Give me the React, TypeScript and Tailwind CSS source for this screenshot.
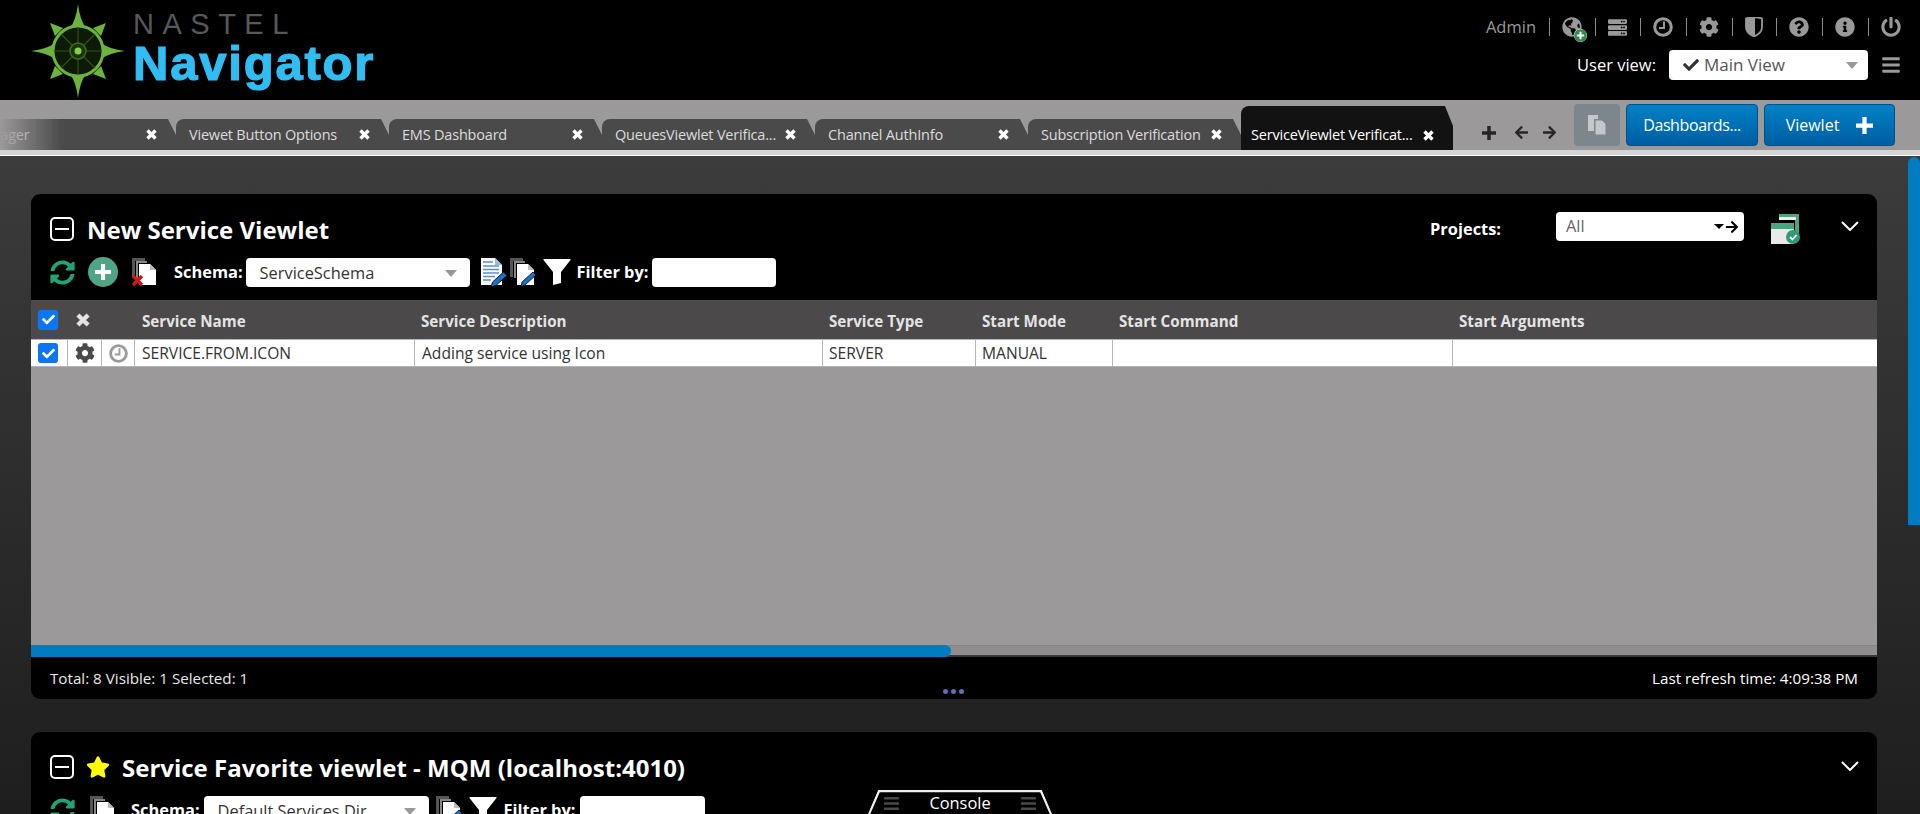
import { ReactNode } from 'react'
import {
  FaArrowLeft, FaArrowRight, FaCheck, FaCog, FaInfoCircle, FaPlusCircle, FaPowerOff,
  FaQuestionCircle, FaServer, FaStar, FaSyncAlt, FaGlobeAmericas, FaBars,
} from 'react-icons/fa'

const tabs = ['Queue Manager', 'Viewet Button Options', 'EMS Dashboard', 'QueuesViewlet Verifica...', 'Channel AuthInfo', 'Subscription Verification']

function Logo() {
  return (
    <div className="flex items-start">
      <svg width="94" height="94" viewBox="0 0 94 94" className="mt-[4px] ml-[31px]">
        <g fill="#6cb33f">
          <path d="M47 0Q49 16 55 24L39 24Q45 16 47 0Z" />
          <path d="M47 94Q49 78 55 70L39 70Q45 78 47 94Z" />
          <path d="M0 47Q16 45 24 39L24 55Q16 49 0 47Z" />
          <path d="M94 47Q78 45 70 39L70 55Q78 49 94 47Z" />
          <path d="M19 19L32 24L24 32Z M75 19L70 32L62 24Z M19 75L24 62L32 70Z M75 75L62 70L70 62Z" />
        </g>
        <circle cx="47" cy="47" r="25" fill="#0c1a06" stroke="#6cb33f" strokeWidth="3" />
        <g stroke="#2f5218" strokeWidth="1.2" fill="none">
          <path d="M47 23V71M23 47H71M30 30L64 64M64 30L30 64" />
        </g>
        <circle cx="47" cy="47" r="8" fill="#1c3510" stroke="#3f6b25" strokeWidth="1.5" />
        <circle cx="47" cy="47" r="3.500" fill="#7fd04a" />
      </svg>
      <div className="ml-[8px] flex flex-col font-['Liberation_Sans',sans-serif]">
        <span className="mt-[8px] text-[29px] leading-[32px] tracking-[8.500px] text-[#58585a]">NASTEL</span>
        <span className="-mt-[2px] text-[49px] leading-[50px] font-bold tracking-[1.800px] text-[#2fbdf4] [-webkit-text-stroke:1.2px_#2fbdf4]">Navigator</span>
      </div>
    </div>
  )
}

function Sep() {
  return <span className="mx-[12.500px] h-[18px] w-px bg-[#8a8a8a]" />
}

function ThickClock({ size }: { size: number }) {
  return (
    <svg width={size} height={size} viewBox="0 0 20 20" fill="none" stroke="currentColor">
      <circle cx="10" cy="10" r="8.300" strokeWidth="3" />
      <path d="M11 4.500V11H6" strokeWidth="2" />
    </svg>
  )
}

function HalfShield() {
  return (
    <svg width="18" height="20" viewBox="0 0 18 20">
      <path d="M1 1.500Q9 -1 17 1.500V10Q17 16 9 19.500Q1 16 1 10Z" fill="none" stroke="currentColor" strokeWidth="1.800" />
      <path d="M1 1.500Q6 0 10 0V20L9 19.500Q1 16 1 10Z" fill="currentColor" />
    </svg>
  )
}

function FatX({ size = 11 }: { size?: number }) {
  return (
    <svg width={size} height={size} viewBox="0 0 11 11" className="shrink-0" stroke="currentColor" strokeWidth="3.400">
      <path d="M1.500 1.500L9.500 9.500M9.500 1.500L1.500 9.500" />
    </svg>
  )
}

function FatPlus({ size }: { size: number }) {
  return (
    <svg width={size} height={size} viewBox="0 0 16 16" fill="currentColor" className="shrink-0">
      <path d="M6 0h4v6h6v4h-6v6H6v-6H0V6h6z" />
    </svg>
  )
}

function Chevron() {
  return (
    <svg width="18" height="10" viewBox="0 0 18 10" fill="none" stroke="#fff" strokeWidth="2" className="shrink-0">
      <path d="M1 1l8 8 8-8" />
    </svg>
  )
}

function Funnel({ className }: { className?: string }) {
  return (
    <svg width="28" height="26" viewBox="0 0 28 26" fill="#fff" className={`shrink-0 ${className ?? ''}`}>
      <path d="M1 0h26q1 0 .500 1L18 13v11l-8 2V13L.500 1Q0 0 1 0z" />
    </svg>
  )
}

function TopBar() {
  return (
    <div className="flex h-[100px] justify-between bg-black">
      <Logo />
      <div className="flex flex-col items-end pr-[19px]">
        <div className="mt-[15px] flex h-[24px] items-center text-[#999999]">
          <span className="text-[16.500px]">Admin</span>
          <Sep />
          <span className="relative">
            <FaGlobeAmericas size={20} />
            <FaPlusCircle size={13} className="absolute -right-[5px] -bottom-[5px] rounded-full bg-white text-[#2d8a4e]" />
          </span>
          <Sep />
          <FaServer size={19} />
          <Sep />
          <ThickClock size={20} />
          <Sep />
          <FaCog size={20} />
          <Sep />
          <HalfShield />
          <Sep />
          <FaQuestionCircle size={20} />
          <Sep />
          <FaInfoCircle size={20} />
          <Sep />
          <FaPowerOff size={20} />
        </div>
        <div className="mt-[11px] flex items-center">
          <span className="mr-[13px] text-[16.500px] text-white">User view:</span>
          <div className="flex h-[30px] w-[199px] items-center rounded-[4px] bg-white pr-[10px] pl-[14px] text-[17px] text-[#555]">
            <FaCheck size={16} className="mr-[5px] text-[#333]" />
            <span>Main View</span>
            <span className="ml-auto h-0 w-0 border-x-[6px] border-t-[7px] border-x-transparent border-t-[#999]" />
          </div>
          <FaBars size={20} className="ml-[13px] text-[#999999]" />
        </div>
      </div>
    </div>
  )
}

function Tab({ label, first }: { label: string; first?: boolean }) {
  return (
    <div className="flex h-[31px] w-[213px] shrink-0 items-center overflow-hidden rounded-tl-lg bg-[#4b4a4a] pr-[19px] pl-[13px] text-[14.500px] tracking-[-0.2px] text-[#dcdcdc] [clip-path:polygon(0_0,calc(100%-8px)_0,100%_16px,100%_100%,0_100%)]">
      <span className={`min-w-0 flex-1 whitespace-nowrap ${first ? '-ml-[53px]' : ''}`}>{label}</span>
      <span className="text-white"><FatX /></span>
    </div>
  )
}

function TabBar() {
  return (
    <div className="flex h-[50px] items-end bg-[#9b9999]">
      <div className="relative flex h-full w-[1456px] shrink-0 items-end overflow-hidden">
        <div className="-ml-[37px] flex items-end">
          {tabs.map((t, i) => <Tab key={t} label={t} first={i === 0} />)}
          <div className="flex h-[44px] w-[212px] shrink-0 items-center rounded-tl-lg bg-[#121212] pt-[14px] pr-[19px] pl-[10px] text-[14.500px] tracking-[-0.2px] text-white [clip-path:polygon(0_0,calc(100%-8px)_0,100%_20px,100%_100%,0_100%)]">
            <span className="min-w-0 flex-1 whitespace-nowrap">ServiceViewlet Verificat...</span>
            <FatX />
          </div>
        </div>
        <div className="absolute top-[19px] left-0 h-[31px] w-[62px] bg-gradient-to-r from-[#9b9999] to-transparent" />
      </div>
      <div className="flex h-full flex-1 items-start">
        <div className="mt-[25px] ml-[26px] flex items-center text-[#25262b]">
          <FatPlus size={14} />
          <FaArrowLeft size={15} className="ml-[18px]" />
          <FaArrowRight size={15} className="ml-[13px]" />
        </div>
        <div className="mt-[4px] ml-[17px] flex h-[42px] w-[46px] items-center justify-center rounded-[4px] bg-[#7d868c]">
          <CopyGlyph />
        </div>
        <button className="mt-[4px] ml-[6px] h-[42px] w-[132px] rounded-[4px] border border-[#00518c] bg-gradient-to-b from-[#0081c6] to-[#005ea2] text-[16px] tracking-[-0.4px] text-white">Dashboards...</button>
        <button className="mt-[4px] ml-[6px] flex h-[42px] w-[131px] items-center justify-center gap-[17px] rounded-[4px] border border-[#00518c] bg-gradient-to-b from-[#0081c6] to-[#005ea2] text-[16px] text-white">
          Viewlet <FatPlus size={17} />
        </button>
      </div>
    </div>
  )
}

function CopyGlyph() {
  return (
    <svg width="20" height="20" viewBox="0 0 20 20" fill="#c4c8cb">
      <path d="M1 0h10v4H7v12H1z" />
      <path d="M8 5h7l4 4v11H8z" stroke="#7d868c" />
    </svg>
  )
}

function DocStack({ mark }: { mark: 'x' | 'pen' | 'none' }) {
  return (
    <svg width="26" height="30" viewBox="0 0 26 30" className="block">
      <path d="M1 1h13v3H4v16H1z" fill="#555" />
      <path d="M5 4h11v2H7v15H5z" fill="#888" />
      <path d="M8 7h11l6 6v15H8z" fill="#fff" />
      <path d="M19 7l6 6h-6z" fill="#bbb" />
      {mark === 'x' && <path d="M2 19l9 9M11 19L2 28" stroke="#d01616" strokeWidth="3.500" />}
      {mark === 'pen' && <path d="M12 30l1-5 11-10 3 3-11 10z" fill="#1c6fc4" stroke="#000" strokeWidth="0.800" />}
    </svg>
  )
}

function TextDoc() {
  return (
    <svg width="28" height="30" viewBox="0 0 28 30" className="block">
      <path d="M1 1h14l7 7v20H1z" fill="#fff" />
      <path d="M15 1l7 7h-7z" fill="#9db8d8" />
      <path d="M3 5h10M3 9h16M3 12.500h16M3 16h16M3 19.500h12M3 23h8" stroke="#5b8fd0" strokeWidth="1.600" />
      <path d="M11 30l1.500-5 11-10 3.500 3.500-11 10z" fill="#1c6fc4" stroke="#000" strokeWidth="0.800" />
    </svg>
  )
}

function Select({ label, w }: { label: string; w: string }) {
  return (
    <div className={`flex h-[29px] items-center rounded-[4px] bg-white pt-[2px] pr-[13px] pl-[14px] text-[16.400px] text-[#333] ${w}`}>
      <span className="whitespace-nowrap">{label}</span>
      <span className="ml-auto h-0 w-0 border-x-[6px] border-t-[7px] border-x-transparent border-t-[#999]" />
    </div>
  )
}

function MinusBox({ size }: { size: string }) {
  return (
    <span className={`flex shrink-0 items-center justify-center rounded-[5px] border-2 border-white ${size}`}>
      <span className="h-[2px] w-[14px] bg-white" />
    </span>
  )
}

function Check() {
  return (
    <span className="flex h-[20px] w-[20px] items-center justify-center rounded-[3px] bg-[#0a76f6] text-white">
      <FaCheck size={13} />
    </span>
  )
}

function Cell({ children, className }: { children?: ReactNode; className?: string }) {
  return <div className={`flex items-center border-r border-[#b5b5b5] ${className ?? ''}`}>{children}</div>
}

const gridCols = 'grid grid-cols-[37px_34px_33px_280px_408px_153px_137px_340px_1fr]'

function ServiceTable() {
  return (
    <div>
      <div className={`${gridCols} h-[39px] bg-[#4b494a] text-[15.200px] font-bold text-[#e4e4e4]`}>
        <div className="flex items-center pl-[7px]"><Check /></div>
        <div className="col-span-2 flex items-center pl-[8px]"><FatX size={14} /></div>
        {['Service Name', 'Service Description', 'Service Type', 'Start Mode', 'Start Command', 'Start Arguments'].map((h, i) => (
          <div key={h} className={`flex items-center pt-[4px] ${i === 0 ? 'pl-[7px]' : 'pl-[6px]'}`}>{h}</div>
        ))}
      </div>
      <div className={`${gridCols} h-[28px] border-y border-[#b5b5b5] bg-white text-[15.600px] text-[#333]`}>
        <Cell className="pl-[7px]"><Check /></Cell>
        <Cell className="justify-center text-[#4b4a4a]"><FaCog size={20} /></Cell>
        <Cell className="justify-center text-[#9a9a9a]"><ThickClock size={19} /></Cell>
        <Cell className="pt-[2px] pl-[7px]">SERVICE.FROM.ICON</Cell>
        <Cell className="pt-[2px] pl-[7px]">Adding service using Icon</Cell>
        <Cell className="pt-[2px] pl-[6px]">SERVER</Cell>
        <Cell className="pt-[2px] pl-[6px]">MANUAL</Cell>
        <Cell />
        <div />
      </div>
      <div className="h-[278px] bg-[#9b9999]" />
      <div className="relative h-[12px] border-t border-b-2 border-t-[#858383] border-b-[#3a3a3a] bg-[#8f8d8d]">
        <div className="absolute -top-px left-0 h-[12px] w-[920px] rounded-r-full bg-[#007dc1]" />
      </div>
    </div>
  )
}

function FirstPanel() {
  return (
    <section className="relative h-[505px] shrink-0 overflow-hidden rounded-[9px] bg-black">
      <div className="flex h-[106px] flex-col">
        <div className="flex h-[63px] items-start pt-[23px] pl-[19px]">
          <MinusBox size="h-[24px] w-[24px]" />
          <h2 className="ml-[13px] text-[24px] leading-[26px] font-bold text-white">New Service Viewlet</h2>
          <div className="ml-auto flex items-start">
            <span className="mr-[55px] text-[16.400px] leading-[24px] font-bold text-white">Projects:</span>
            <div className="-mt-[5px] flex h-[29px] w-[188px] items-center rounded-[4px] bg-white pr-[5px] pl-[10px] text-[16.400px] text-[#666]">
              All
              <span className="ml-auto h-0 w-0 border-x-[5px] border-t-[5px] border-x-transparent border-t-black" />
              <FaArrowRight size={14} className="ml-[1px] text-black" />
            </div>
            <svg width="30" height="30" viewBox="0 0 30 30" className="-mt-[3px] ml-[27px]">
              <path d="M8 0h20v24h-4V6H8z" fill="#4fa37f" />
              <path d="M8 3h17v3H8z" fill="#eee" />
              <rect x="0" y="9" width="23" height="21" fill="#e9e9e9" />
              <rect x="0" y="9" width="23" height="6" fill="#4fa37f" />
              <circle cx="22" cy="23" r="7" fill="#2f9a78" />
              <path d="M19 23l2.500 2.500L25.500 21" stroke="#fff" strokeWidth="1.800" fill="none" />
            </svg>
            <span className="mt-[4px] mr-[18px] ml-[40px]"><Chevron /></span>
          </div>
        </div>
        <div className="flex items-center pl-[19px]">
          <FaSyncAlt size={25} className="text-[#1fa574]" />
          <span className="ml-[13px] flex h-[30px] w-[30px] items-center justify-center rounded-full bg-[#4fa585] text-white"><FatPlus size={16} /></span>
          <span className="ml-[13px]"><DocStack mark="x" /></span>
          <span className="ml-[17px] text-[16.400px] font-bold text-white">Schema:</span>
          <Select label="ServiceSchema" w="ml-[3px] w-[224px]" />
          <span className="ml-[10px]"><TextDoc /></span>
          <span className="ml-[1px]"><DocStack mark="pen" /></span>
          <Funnel className="ml-[8px]" />
          <span className="ml-[6px] text-[16.400px] font-bold text-white">Filter by:</span>
          <div className="ml-[4px] h-[29px] w-[124px] rounded-[4px] bg-white" />
        </div>
      </div>
      <ServiceTable />
      <div className="relative flex h-[42px] items-center justify-between pr-[19px] pl-[19px] text-[15.200px] text-[#e8e8e8]">
        <span>Total: 8 Visible: 1 Selected: 1</span>
        <span className="text-white">Last refresh time: 4:09:38 PM</span>
        <div className="absolute bottom-[5px] left-[912px] flex gap-[3px]">
          <span className="h-[5px] w-[5px] rounded-full bg-[#5f6fb5]" />
          <span className="h-[5px] w-[5px] rounded-full bg-[#5f6fb5]" />
          <span className="h-[5px] w-[5px] rounded-full bg-[#5f6fb5]" />
        </div>
      </div>
    </section>
  )
}

function SecondPanel() {
  return (
    <section className="h-[200px] shrink-0 rounded-[9px] bg-black">
      <div className="flex items-start pt-[23px] pl-[19px]">
        <MinusBox size="h-[24px] w-[24px]" />
        <FaStar size={24} className="ml-[12px] text-[#ffff00]" />
        <h2 className="ml-[12px] text-[24px] leading-[26px] font-bold text-white">Service Favorite viewlet - MQM (localhost:4010)</h2>
        <span className="mt-[6px] mr-[18px] ml-auto"><Chevron /></span>
      </div>
      <div className="mt-[14px] flex items-center pl-[19px]">
        <FaSyncAlt size={25} className="text-[#1fa574]" />
        <span className="ml-[14px]"><DocStack mark="none" /></span>
        <span className="ml-[16px] text-[16.400px] font-bold text-white">Schema:</span>
        <Select label="Default Services Dir" w="ml-[4px] w-[225px]" />
        <span className="ml-[6px]"><DocStack mark="pen" /></span>
        <Funnel className="ml-[8px]" />
        <span className="ml-[7px] text-[16.400px] font-bold text-white">Filter by:</span>
        <div className="ml-[5px] h-[29px] w-[125px] rounded-[4px] bg-white" />
      </div>
    </section>
  )
}

function ConsoleTab() {
  return (
    <div className="absolute bottom-0 left-[868px] flex h-[24px] w-[184px] items-center justify-between bg-black px-[15px] pt-[2px] text-[16.400px] text-white [clip-path:polygon(10px_0,174px_0,100%_100%,0_100%)]">
      <svg width="184" height="24" className="absolute top-0 left-0">
        <path d="M0 26L11 1H173L184 26" fill="none" stroke="#eee" strokeWidth="2.500" />
      </svg>
      <FaBars size={17} className="text-[#4a4a4a]" />
      <span>Console</span>
      <FaBars size={17} className="text-[#4a4a4a]" />
    </div>
  )
}

export default function App() {
  return (
    <div className="relative flex h-screen flex-col overflow-hidden bg-black font-['Open_Sans',sans-serif]">
      <TopBar />
      <TabBar />
      <div className="h-[5px] bg-[#d4d4d4]" />
      <div className="h-[1px] bg-white" />
      <main className="flex min-h-0 flex-1 flex-col gap-[33px] bg-gradient-to-b from-[#3c3c3c] to-[#1e1e1e] pt-[38px] pr-[43px] pl-[31px]">
        <FirstPanel />
        <SecondPanel />
      </main>
      <div className="absolute top-[157px] right-0 h-[368px] w-[12px] rounded-t-full bg-[#007dc1]" />
      <ConsoleTab />
    </div>
  )
}
